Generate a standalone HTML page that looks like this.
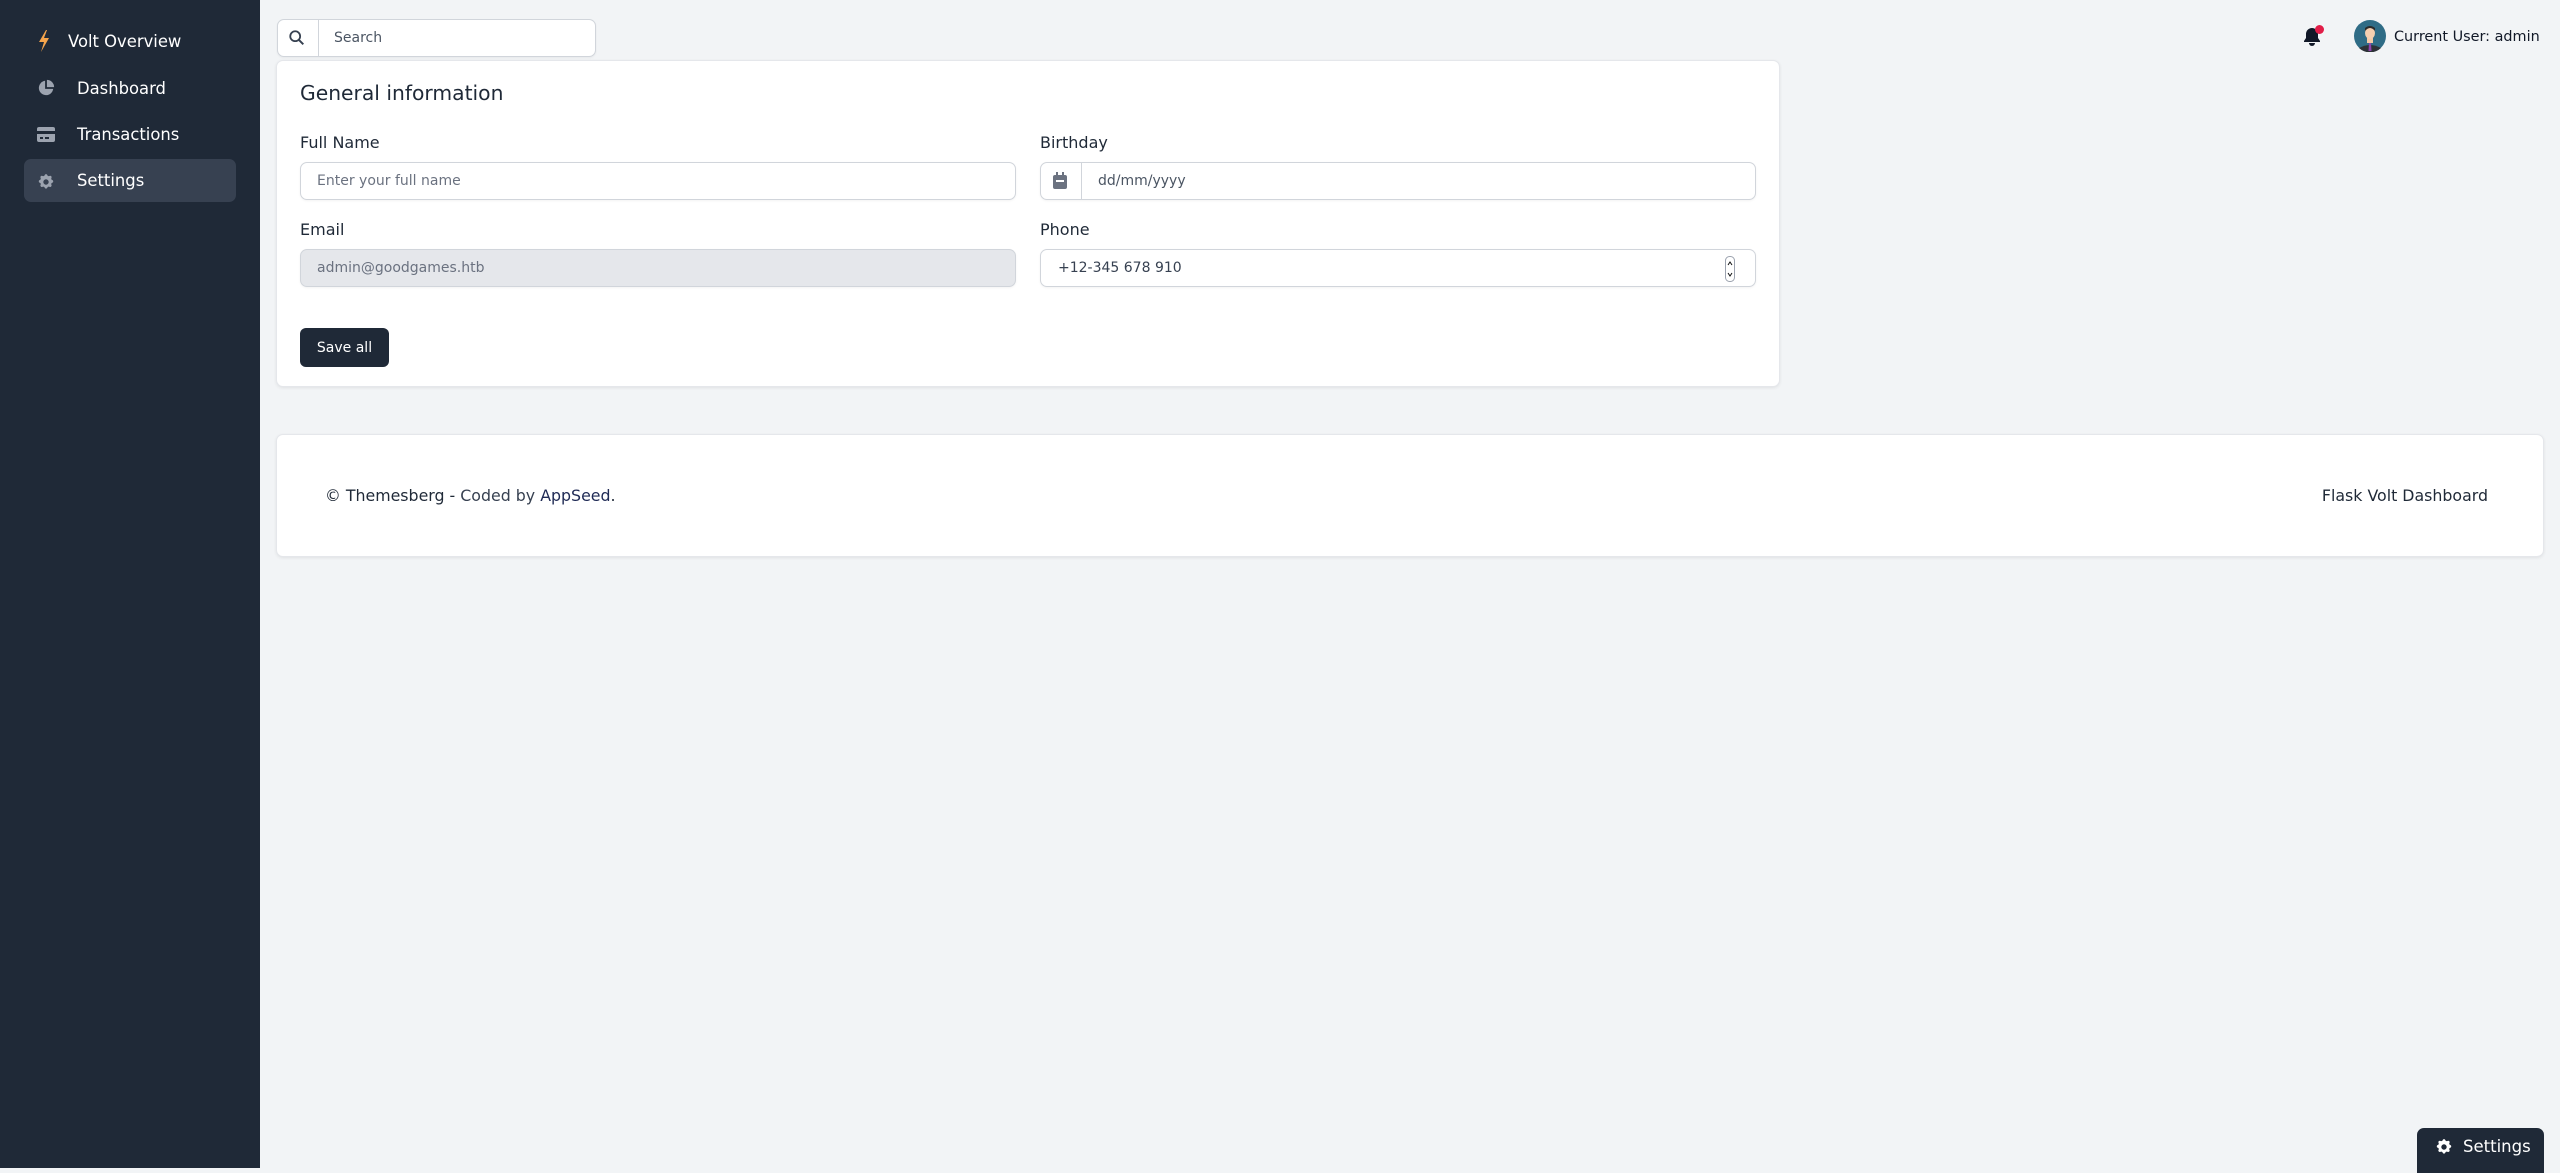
<!DOCTYPE html>
<html><head><meta charset="utf-8"><style>
*{box-sizing:border-box;margin:0;padding:0}
body{width:2560px;height:1168px;background:#f2f4f6;font-family:"DejaVu Sans","Liberation Sans",sans-serif;position:relative;overflow:hidden;color:#1f2937}
.sb{position:absolute;left:0;top:0;width:260px;height:1168px;background:#1f2937}
.nav{position:absolute;color:#fff;font-size:16.4px;line-height:20px}
.act{position:absolute;left:24px;top:159px;width:212px;height:43px;background:#374151;border-radius:7px}
.ic{position:absolute}
.abs{position:absolute}
.inp{position:absolute;background:#fff;border:1px solid #d1d5db;border-radius:7px;font-size:14px;color:#4b5563;box-shadow:0 1px 2px rgba(0,0,0,.05)}
.lbl{position:absolute;font-size:16px;color:#1f2937;line-height:20px}
.card{position:absolute;background:#fff;border:1px solid #e5e7eb;border-radius:7px;box-shadow:0 1px 3px rgba(0,0,0,.08)}
</style></head><body>
<div class="sb"></div>
<div class="act"></div>
<svg class="ic" style="left:37px;top:29px" width="14" height="24" viewBox="0 0 14 24"><path d="M9 1 L2 13 H7 L4 23 L12 9 H7 L10 1Z" fill="#f6a54c"/></svg>
<div class="nav" style="left:68px;top:32px">Volt Overview</div>
<svg class="ic" style="left:37px;top:79px" width="18" height="18" viewBox="0 0 20 20"><path d="M9 2a8 8 0 1 0 9 9H9z" fill="#9ca3af"/><path d="M11 1v8h8a8 8 0 0 0-8-8z" fill="#9ca3af"/></svg>
<div class="nav" style="left:77px;top:79px">Dashboard</div>
<svg class="ic" style="left:37px;top:127px" width="18" height="15" viewBox="0 0 18 15"><rect x="0" y="0" width="18" height="15" rx="2" fill="#9ca3af"/><rect x="0" y="4" width="18" height="3" fill="#1f2937"/><rect x="3" y="10" width="3" height="2" fill="#1f2937"/><rect x="8" y="10" width="4" height="2" fill="#1f2937"/></svg>
<div class="nav" style="left:77px;top:125px">Transactions</div>
<svg class="ic" style="left:37px;top:173px" width="18" height="18" viewBox="0 0 20 20"><path fill="#9ca3af" fill-rule="evenodd" d="M11.5 2.3a1.6 1.6 0 0 0-3 0 1.6 1.6 0 0 1-2.3 1A1.6 1.6 0 0 0 4 5.5a1.6 1.6 0 0 1-1 2.3 1.6 1.6 0 0 0 0 3 1.6 1.6 0 0 1 1 2.3 1.6 1.6 0 0 0 2.2 2.2 1.6 1.6 0 0 1 2.3 1 1.6 1.6 0 0 0 3 0 1.6 1.6 0 0 1 2.3-1 1.6 1.6 0 0 0 2.200-2.2 1.6 1.6 0 0 1 1-2.3 1.6 1.6 0 0 0 0-3 1.6 1.6 0 0 1-1-2.3A1.6 1.6 0 0 0 13.8 3.3a1.6 1.6 0 0 1-2.3-1zM10 13a3 3 0 1 0 0-6 3 3 0 0 0 0 6z"/></svg>
<div class="nav" style="left:77px;top:171px">Settings</div>

<div class="inp" style="left:277px;top:19px;width:319px;height:38px"></div>
<div class="abs" style="left:318px;top:20px;width:1px;height:36px;background:#d1d5db"></div>
<svg class="ic" style="left:288px;top:29px" width="18" height="18" viewBox="0 0 20 20"><circle cx="8" cy="8" r="5.5" stroke="#374151" stroke-width="2" fill="none"/><path d="M12 12l5 5" stroke="#374151" stroke-width="2.2"/></svg>
<div class="abs" style="left:334px;top:30px;font-size:14px;color:#4b5563">Search</div>

<svg class="ic" style="left:2303px;top:26px" width="18" height="22" viewBox="0 0 18 22"><path d="M9 2a6 6 0 0 0-6 6v4l-2 3v1h16v-1l-2-3V8a6 6 0 0 0-6-6z" fill="#111827"/><path d="M6 17a3 3 0 0 0 6 0z" fill="#111827"/></svg>
<div class="abs" style="left:2315px;top:25px;width:9px;height:9px;border-radius:50%;background:#e11d48"></div>
<svg class="ic" style="left:2354px;top:20px" width="32" height="32" viewBox="0 0 32 32"><circle cx="16" cy="16" r="16" fill="#2f6c86"/><path d="M5 28q11-6 22 0a16 16 0 0 1-22 0z" fill="#2d3238"/><rect x="13" y="18" width="6" height="5" fill="#f2c9a6"/><ellipse cx="16" cy="13" rx="5" ry="6" fill="#f5cfb0"/><path d="M11 11q5-6 10 0l0-3q-5-4-10 0z" fill="#2b2b2b"/><path d="M15 23h2l.5 8h-3z" fill="#8e44ad"/></svg>
<div class="abs" style="left:2394px;top:29px;font-size:14.4px;color:#111827">Current User: admin</div>

<div class="card" style="left:276px;top:60px;width:1504px;height:327px"></div>
<div class="abs" style="left:300px;top:81px;font-size:20.3px;color:#1f2937">General information</div>
<div class="lbl" style="left:300px;top:133px">Full Name</div>
<div class="inp" style="left:300px;top:162px;width:716px;height:38px;padding:10px 16px;color:#6b7280">Enter your full name</div>
<div class="lbl" style="left:1040px;top:133px">Birthday</div>
<div class="inp" style="left:1040px;top:162px;width:716px;height:38px"></div>
<div class="abs" style="left:1081px;top:163px;width:1px;height:36px;background:#d1d5db"></div>
<svg class="ic" style="left:1053px;top:172px" width="14" height="17" viewBox="0 0 14 17"><rect x="0" y="3" width="14" height="14" rx="2" fill="#6b7280"/><rect x="3" y="0" width="2" height="4" fill="#6b7280"/><rect x="9" y="0" width="2" height="4" fill="#6b7280"/><rect x="3" y="8" width="8" height="2" fill="#fff"/></svg>
<div class="abs" style="left:1098px;top:173px;font-size:14px;color:#4b5563">dd/mm/yyyy</div>
<div class="lbl" style="left:300px;top:220px">Email</div>
<div class="inp" style="left:300px;top:249px;width:716px;height:38px;background:#e5e7eb;padding:10px 16px;color:#6b7280">admin@goodgames.htb</div>
<div class="lbl" style="left:1040px;top:220px">Phone</div>
<div class="inp" style="left:1040px;top:249px;width:716px;height:38px;padding:10px 17px;color:#374151">+12-345 678 910</div>
<svg class="ic" style="left:1725px;top:256px" width="10" height="26" viewBox="0 0 10 26"><rect x="0.5" y="0.5" width="9" height="25" rx="4" fill="#fff" stroke="#9ca3af"/><path d="M3 9l2-3 2 3M3 17l2 3 2-3" stroke="#111" fill="none"/></svg>
<div class="abs" style="left:300px;top:328px;width:89px;height:39px;background:#1f2937;border-radius:6px;color:#fff;font-size:14px;line-height:40px;text-align:center">Save all</div>

<div class="card" style="left:276px;top:434px;width:2268px;height:123px"></div>
<div class="abs" style="left:325px;top:486px;font-size:15.8px;color:#1f2937">© Themesberg - <span style="color:#374151">Coded by</span> <span style="color:#1f2a55">AppSeed</span>.</div>
<div class="abs" style="right:72px;top:486px;font-size:15.8px;color:#1f2937">Flask Volt Dashboard</div>

<div class="abs" style="left:2417px;top:1128px;width:127px;height:45px;background:#1f2937;border-radius:7px 7px 0 0"></div>
<svg class="ic" style="left:2435px;top:1138px" width="18" height="18" viewBox="0 0 20 20"><path fill="#fff" fill-rule="evenodd" d="M11.5 2.3a1.6 1.6 0 0 0-3 0 1.6 1.6 0 0 1-2.3 1A1.6 1.6 0 0 0 4 5.5a1.6 1.6 0 0 1-1 2.3 1.6 1.6 0 0 0 0 3 1.6 1.6 0 0 1 1 2.3 1.6 1.6 0 0 0 2.2 2.2 1.6 1.6 0 0 1 2.3 1 1.6 1.6 0 0 0 3 0 1.6 1.6 0 0 1 2.3-1 1.6 1.6 0 0 0 2.2-2.2 1.6 1.6 0 0 1 1-2.3 1.6 1.6 0 0 0 0-3 1.6 1.6 0 0 1-1-2.3A1.6 1.6 0 0 0 13.8 3.3a1.6 1.6 0 0 1-2.3-1zM10 13a3 3 0 1 0 0-6 3 3 0 0 0 0 6z"/></svg>
<div class="abs" style="left:2463px;top:1137px;font-size:16.5px;color:#fff">Settings</div>
</body></html>
